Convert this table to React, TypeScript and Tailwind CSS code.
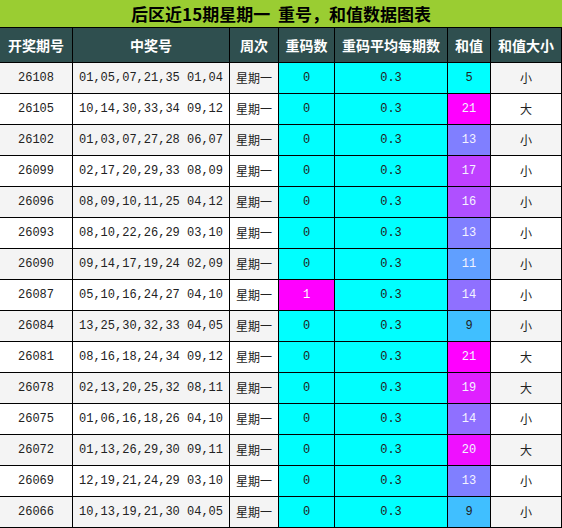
import React from "react";

type Row = [string, string, number, number];

const rows: Row[] = [
  ["26108", "01,05,07,21,35 01,04", 0, 5],
  ["26105", "10,14,30,33,34 09,12", 0, 21],
  ["26102", "01,03,07,27,28 06,07", 0, 13],
  ["26099", "02,17,20,29,33 08,09", 0, 17],
  ["26096", "08,09,10,11,25 04,12", 0, 16],
  ["26093", "08,10,22,26,29 03,10", 0, 13],
  ["26090", "09,14,17,19,24 02,09", 0, 11],
  ["26087", "05,10,16,24,27 04,10", 1, 14],
  ["26084", "13,25,30,32,33 04,05", 0, 9],
  ["26081", "08,16,18,24,34 09,12", 0, 21],
  ["26078", "02,13,20,25,32 08,11", 0, 19],
  ["26075", "01,06,16,18,26 04,10", 0, 14],
  ["26072", "01,13,26,29,30 09,11", 0, 20],
  ["26069", "12,19,21,24,29 03,10", 0, 13],
  ["26066", "10,13,19,21,30 04,05", 0, 9],
];

const cjk = "font-['Noto_Sans_CJK_SC','Noto_Sans',sans-serif]";
const mono = "font-['Liberation_Mono','Noto_Sans_CJK_SC',monospace]";

function sumColor(v: number) {
  const t = Math.max(0, Math.min(1, (v - 5) / 16));
  const r = Math.round(255 * t);
  const g = 255 - r;
  return `rgb(${r},${g},255)`;
}

const headers = ["开奖期号", "中奖号", "周次", "重码数", "重码平均每期数", "和值", "和值大小"];

export default function App() {
  return (
    <div className="w-[562px] h-[528px] overflow-hidden bg-white">
      <div
        className={`h-[28px] bg-[#9acd32] border-b border-black flex items-center justify-center text-[17px] font-bold text-black ${cjk}`}
      >
        后区近15期星期一&nbsp;&nbsp;重号，和值数据图表
      </div>
      <div className="grid grid-cols-[73px_157px_49px_56px_113px_43px_71px] auto-rows-[31px] [grid-template-rows:35px]">
        {headers.map((h) => (
          <div
            key={h}
            className={`h-[35px] bg-[#2f4f4f] border-r border-b border-black flex items-center justify-center text-white text-[14px] font-bold ${cjk}`}
          >
            {h}
          </div>
        ))}
        {rows.map(([id, nums, rep, sum], i) => {
          const bg = i % 2 === 0 ? "bg-[#f4f4f4]" : "bg-white";
          const cell = "border-r border-b border-black flex items-center justify-center text-[12px] text-[#222]";
          return (
            <React.Fragment key={id}>
              <div className={`${cell} ${bg} ${mono}`}>{id}</div>
              <div className={`${cell} ${bg} ${mono}`}>{nums}</div>
              <div className={`${cell} ${bg} ${cjk}`}>星期一</div>
              {rep === 1 ? (
                <div className={`${cell} bg-[#ff00ff] ${mono} !text-white`}>{rep}</div>
              ) : (
                <div className={`${cell} bg-[#00ffff] ${mono}`}>{rep}</div>
              )}
              <div className={`${cell} bg-[#00ffff] ${mono}`}>0.3</div>
              <div
                className={`${cell} ${mono} ${sum >= 11 ? "!text-[#f4f4ff]" : ""}`}
                style={{ backgroundColor: sumColor(sum) }}
              >
                {sum}
              </div>
              <div className={`${cell} ${bg} ${cjk}`}>{sum >= 19 ? "大" : "小"}</div>
            </React.Fragment>
          );
        })}
      </div>
    </div>
  );
}
